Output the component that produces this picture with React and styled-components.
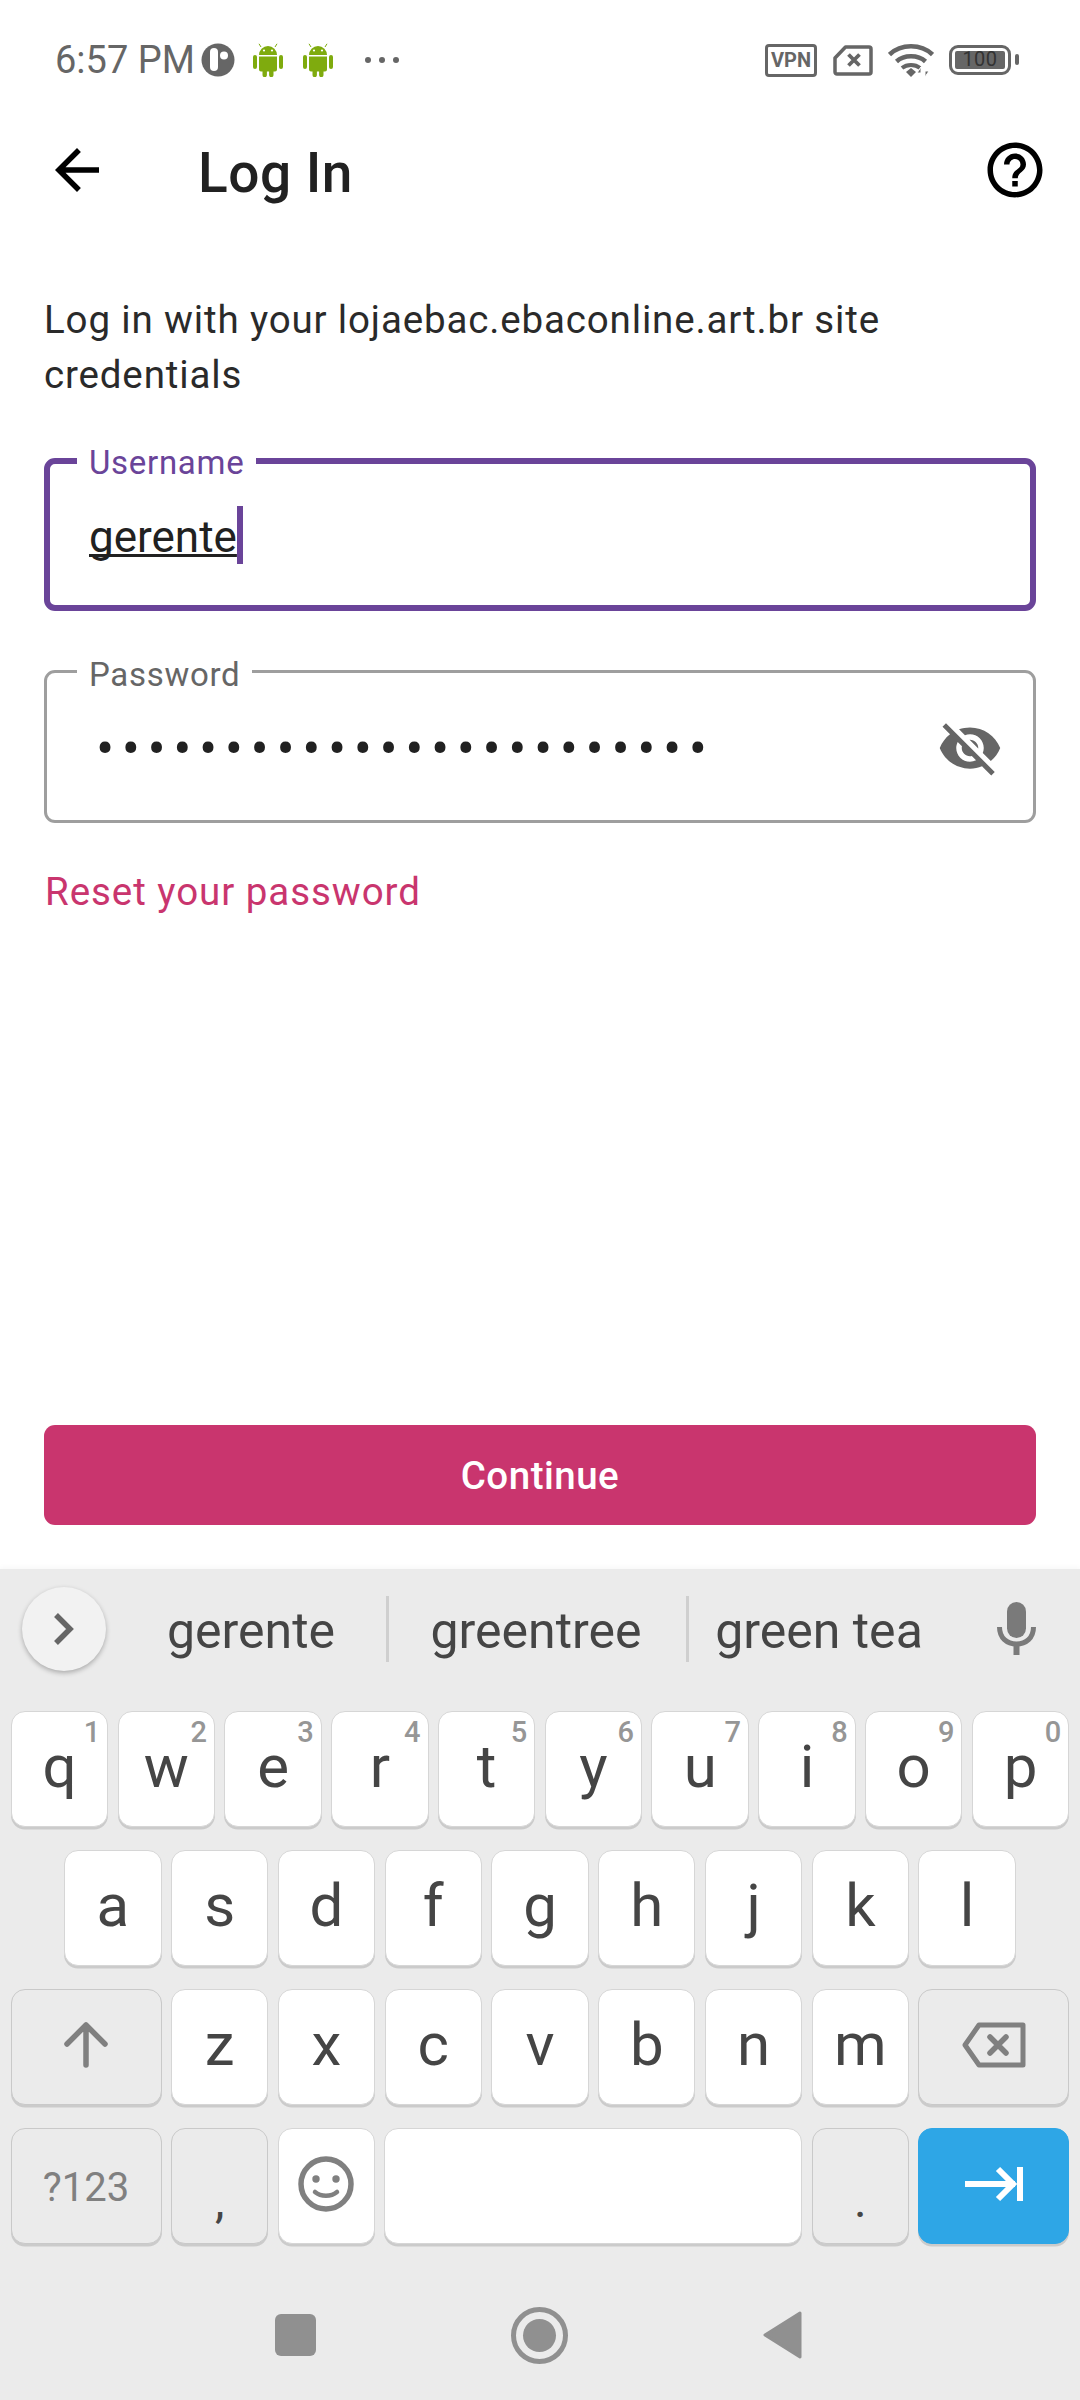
import React from "react";
import styled, { createGlobalStyle } from "styled-components";

const Global = createGlobalStyle`
  html, body { margin: 0; padding: 0; background: #fff; }
  * { box-sizing: border-box; }
`;

const Screen = styled.div`
  width: 1080px;
  height: 2400px;
  display: flex;
  flex-direction: column;
  overflow: hidden;
  background: #fff;
  font-family: Roboto, "Liberation Sans", sans-serif;
`;

const StatusBar = styled.div`
  height: 120px;
  flex: none;
  display: flex;
  align-items: center;
  justify-content: space-between;
  padding: 0 69px 0 55px;
  color: #666;
`;
const StatusGroup = styled.div`
  display: flex;
  align-items: center;
`;
const Time = styled.span`
  font-size: 38px;
  line-height: 44px;
  width: 146px;
  white-space: nowrap;
`;
const VpnBadge = styled.span`
  width: 52px;
  height: 33px;
  border: 3.5px solid #666;
  border-radius: 4px;
  font-size: 20px;
  font-weight: 700;
  line-height: 26px;
  text-align: center;
  margin-right: 16px;
`;
const Battery = styled.div`
  position: relative;
  width: 62px;
  height: 30px;
  border: 3.5px solid #666;
  border-radius: 9px;
  padding: 3px;
  margin-left: 15px;
  display: flex;
  &::after {
    content: "";
    position: absolute;
    right: -11px;
    top: 6px;
    width: 4px;
    height: 11px;
    border-radius: 2px;
    background: #666;
  }
`;
const BatteryFill = styled.span`
  flex: 1;
  background: #666;
  border-radius: 2px;
  color: #333;
  font-size: 20px;
  line-height: 17px;
  text-align: center;
  letter-spacing: 0.5px;
`;

const AppBar = styled.div`
  height: 100px;
  flex: none;
  display: flex;
  align-items: center;
  padding: 0 32px 0 44px;
`;
const Title = styled.h1`
  margin: 0 0 0 88px;
  padding-top: 5px;
  flex: 1;
  font-size: 55px;
  font-weight: 500;
  color: #212121;
  letter-spacing: 0.5px;
  line-height: 66px;
`;
const IconGlyph = styled.svg`
  display: block;
  flex: none;
`;

const Main = styled.div`
  flex: 1;
  display: flex;
  flex-direction: column;
  padding: 72px 44px 44px;
`;
const Intro = styled.p`
  margin: 0 0 56px;
  font-size: 38.5px;
  line-height: 55px;
  letter-spacing: 0.85px;
  color: #2a2a2a;
`;
const Field = styled.div`
  position: relative;
  height: 153px;
  border: ${(p) => (p.$active ? "6px solid #6A4499" : "3px solid #9E9E9E")};
  border-radius: 11px;
  display: flex;
  align-items: center;
  padding-left: ${(p) => (p.$active ? "39px" : "42px")};
  margin-bottom: 59px;
`;
const FieldLabel = styled.label`
  position: absolute;
  left: ${(p) => (p.$active ? "27px" : "30px")};
  top: ${(p) => (p.$active ? "-21px" : "-18px")};
  padding: 0 12px;
  background: #fff;
  color: ${(p) => (p.$active ? "#6A4499" : "#666")};
  font-size: 33px;
  line-height: 40px;
  letter-spacing: 0.7px;
`;
const Typed = styled.span`
  font-size: 44px;
  line-height: 58px;
  color: #212121;
  padding-top: 5px;
  text-decoration: underline;
  text-decoration-thickness: 2.5px;
  text-underline-offset: 2px;
  text-decoration-skip-ink: none;
`;
const Caret = styled.span`
  width: 6px;
  height: 58px;
  background: #6A4499;
`;
const Dots = styled.span`
  font-size: 54px;
  line-height: 58px;
  padding-top: 5px;
  color: #212121;
  letter-spacing: 7.55px;
  margin-left: 7px;
  white-space: nowrap;
`;
const EyeButton = styled.span`
  position: absolute;
  right: 30px;
  top: 42px;
`;
const ResetLink = styled.a`
  margin-top: -18px;
  margin-left: 1px;
  font-size: 38.5px;
  line-height: 55px;
  letter-spacing: 0.95px;
  color: #C9356E;
`;
const PrimaryButton = styled.button`
  margin-top: auto;
  height: 100px;
  border: 0;
  border-radius: 11px;
  padding-top: 2px;
  background: #C9356E;
  color: #fff;
  font-family: inherit;
  font-size: 38.5px;
  font-weight: 500;
  letter-spacing: 0.5px;
`;

const Keyboard = styled.div`
  flex: none;
  height: 831px;
  background: #ebebeb;
  box-shadow: 0 -2px 5px rgba(0, 0, 0, 0.03);
  display: flex;
  flex-direction: column;
`;
const Suggestions = styled.div`
  height: 142px;
  flex: none;
  display: grid;
  grid-template-columns: 116px 270px 300px 266px 128px;
  padding-top: 18px;
`;
const Expand = styled.div`
  width: 84px;
  height: 84px;
  margin-left: 22px;
  border-radius: 50%;
  background: #f2f2f2;
  box-shadow: 0 2px 5px rgba(0, 0, 0, 0.28);
  display: flex;
  align-items: center;
  justify-content: center;
`;
const Suggestion = styled.div`
  height: 66px;
  margin-top: 9px;
  display: flex;
  align-items: center;
  justify-content: center;
  font-size: 50px;
  color: #454545;
  white-space: nowrap;
  padding-top: 3px;
  border-left: ${(p) => (p.$divided ? "3px solid #cfcfcf" : "0")};
  padding-right: ${(p) => (p.$divided ? "3px" : "0")};
`;
const MicCell = styled.div`
  display: flex;
  justify-content: center;
  padding-top: 15px;
`;
const KeyRows = styled.div`
  display: flex;
  flex-direction: column;
  gap: 23px;
`;
const KeyRow = styled.div`
  display: flex;
  justify-content: center;
  gap: 9.4px;
`;
const Key = styled.div`
  position: relative;
  flex: none;
  width: ${(p) => p.$w || 97.4}px;
  height: 116px;
  border-radius: 14px;
  background: ${(p) => (p.$tone === "accent" ? "#2EA6E6" : p.$tone === "muted" ? "#ebebeb" : "#fff")};
  border: 1.5px solid ${(p) => (p.$tone === "accent" ? "#2EA6E6" : p.$tone === "muted" ? "#c9c9c9" : "#d6d6d6")};
  box-shadow: 0 2.5px 0 #cbcbcb;
  display: flex;
  align-items: center;
  justify-content: center;
  color: #454545;
  font-size: 60px;
  padding-bottom: 5px;
`;
const Hint = styled.span`
  position: absolute;
  top: 3px;
  right: 7px;
  font-size: 29px;
  line-height: 34px;
  font-weight: 500;
  color: #969696;
`;
const ModeLabel = styled.span`
  font-size: 40px;
  color: #808080;
  padding-top: 7px;
`;
const PunctLabel = styled.span`
  font-size: 48px;
  color: #454545;
  padding-top: 34px;
`;
const NavBar = styled.div`
  margin-top: 26px;
  height: 130px;
  padding-right: 3px;
  display: flex;
  align-items: center;
  justify-content: center;
  gap: 195px;
`;
const NavSquare = styled.span`
  width: 41px;
  height: 42px;
  border-radius: 6px;
  background: #909090;
`;
const NavCircle = styled.span`
  width: 57px;
  height: 57px;
  border-radius: 50%;
  border: 5px solid #909090;
  padding: 7px;
  display: flex;
  &::after {
    content: "";
    flex: 1;
    border-radius: 50%;
    background: #909090;
  }
`;

const AndroidIcon = ({ style }) => (
  <IconGlyph width="30" height="34" viewBox="0 0 30 34" style={style}>
    <g fill="#7FAB0E">
      <path d="M6 12a9 9 0 0 1 18 0z" />
      <path d="M8 4 6 .8M22 4l2-3.2" stroke="#7FAB0E" strokeWidth="1" />
      <path d="M6 13.500h18v13a2 2 0 0 1-2 2h-1.500v3.500a2.200 2.200 0 0 1-4.400 0v-3.500h-2.200v3.500a2.200 2.200 0 0 1-4.400 0v-3.500H8a2 2 0 0 1-2-2z" />
      <rect x="0" y="12" width="4" height="14" rx="2" />
      <rect x="26" y="12" width="4" height="14" rx="2" />
    </g>
    <circle cx="11" cy="7.500" r="1.100" fill="#fff" />
    <circle cx="19" cy="7.500" r="1.100" fill="#fff" />
  </IconGlyph>
);

const M = ({ d, size = 66, color = "#000" }) => (
  <IconGlyph width={size} height={size} viewBox="0 0 24 24">
    <path d={d} fill={color} />
  </IconGlyph>
);

const rows = [
  [["q", 1], ["w", 2], ["e", 3], ["r", 4], ["t", 5], ["y", 6], ["u", 7], ["i", 8], ["o", 9], ["p", 0]],
  [["a"], ["s"], ["d"], ["f"], ["g"], ["h"], ["j"], ["k"], ["l"]],
];
const lower = ["z", "x", "c", "v", "b", "n", "m"];

export default function App() {
  return (
    <Screen>
      <Global />
      <StatusBar>
        <StatusGroup>
          <Time>6:57 PM</Time>
          <IconGlyph width="34" height="34" viewBox="0 0 34 34" style={{ marginRight: 18 }}>
            <circle cx="17" cy="17" r="16.500" fill="#666" />
            <rect x="9" y="5" width="8" height="23" rx="4" fill="#fff" />
            <circle cx="23" cy="12.500" r="4" fill="#fff" />
          </IconGlyph>
          <AndroidIcon style={{ marginRight: 20 }} />
          <AndroidIcon style={{ marginRight: 32 }} />
          <IconGlyph width="34" height="8" viewBox="0 0 34 8">
            <circle cx="3" cy="4" r="3" fill="#666" />
            <circle cx="17" cy="4" r="3" fill="#666" />
            <circle cx="31" cy="4" r="3" fill="#666" />
          </IconGlyph>
        </StatusGroup>
        <StatusGroup>
          <VpnBadge>VPN</VpnBadge>
          <IconGlyph width="40" height="31" viewBox="0 0 40 31" style={{ marginRight: 15 }}>
            <path d="M12.500 2H36a2 2 0 0 1 2 2v23a2 2 0 0 1-2 2H4a2 2 0 0 1-2-2V13z" fill="none" stroke="#666" strokeWidth="3.500" strokeLinejoin="round" />
            <path d="M15.500 9.500l11 11M26.500 9.500l-11 11" stroke="#666" strokeWidth="3.800" />
          </IconGlyph>
          <IconGlyph width="46" height="34" viewBox="0 0 46 34">
            <path d="M1.500 11.500C13 .5 33 .5 44.500 11.500" fill="none" stroke="#666" strokeWidth="4.500" />
            <path d="M8.500 18.500C16 11.500 30 11.500 37.500 18.500" fill="none" stroke="#666" strokeWidth="4.500" />
            <path d="M14 25c5-4 13-4 18 0" fill="none" stroke="#666" strokeWidth="4" />
            <path d="M18 29l5-4 5 4-5 5z" fill="#666" />
            <path d="M33 34v-10l-4 6h4zM37 24v10l4-6h-4z" fill="#666" stroke="#fff" strokeWidth="1" />
          </IconGlyph>
          <Battery>
            <BatteryFill>100</BatteryFill>
          </Battery>
        </StatusGroup>
      </StatusBar>

      <AppBar>
        <M d="M20 11H7.830l5.590-5.590L12 4l-8 8 8 8 1.410-1.410L7.830 13H20v-2z" />
        <Title>Log In</Title>
        <M d="M11 18h2v-2h-2v2zm1-16C6.480 2 2 6.480 2 12s4.480 10 10 10 10-4.480 10-10S17.520 2 12 2zm0 18c-4.410 0-8-3.590-8-8s3.590-8 8-8 8 3.590 8 8-3.590 8-8 8zm0-14c-2.210 0-4 1.790-4 4h2c0-1.100.9-2 2-2s2 .9 2 2c0 2-3 1.750-3 5h2c0-2.250 3-2.500 3-5 0-2.210-1.790-4-4-4z" />
      </AppBar>

      <Main>
        <Intro>
          Log in with your lojaebac.ebaconline.art.br site credentials
        </Intro>
        <Field $active>
          <FieldLabel $active>Username</FieldLabel>
          <Typed>gerente</Typed>
          <Caret />
        </Field>
        <Field>
          <FieldLabel>Password</FieldLabel>
          <Dots>{"•".repeat(24)}</Dots>
          <EyeButton>
            <M
              color="#666"
              d="M12 7c2.760 0 5 2.240 5 5 0 .65-.13 1.260-.36 1.830l2.920 2.920c1.510-1.260 2.700-2.890 3.430-4.750-1.730-4.390-6-7.500-11-7.500-1.400 0-2.740.25-3.980.7l2.160 2.160C10.740 7.130 11.350 7 12 7zM2 4.270l2.280 2.280.46.46C3.080 8.300 1.780 10.020 1 12c1.730 4.390 6 7.500 11 7.500 1.550 0 3.030-.3 4.380-.84l.42.42L19.730 22 21 20.730 3.270 3 2 4.270zM7.530 9.800l1.550 1.550c-.05.21-.08.43-.08.65 0 1.660 1.340 3 3 3 .22 0 .44-.03.65-.08l1.550 1.550c-.67.33-1.410.53-2.200.53-2.760 0-5-2.240-5-5 0-.79.2-1.530.53-2.200zm4.310-.78l3.150 3.150.02-.16c0-1.660-1.340-3-3-3l-.17.01z"
            />
          </EyeButton>
        </Field>
        <ResetLink>Reset your password</ResetLink>
        <PrimaryButton>Continue</PrimaryButton>
      </Main>

      <Keyboard>
        <Suggestions>
          <Expand>
            <IconGlyph width="22" height="34" viewBox="0 0 22 34">
              <path d="M3 3l14 14L3 31" fill="none" stroke="#666" strokeWidth="5.500" />
            </IconGlyph>
          </Expand>
          <Suggestion>gerente</Suggestion>
          <Suggestion $divided>greentree</Suggestion>
          <Suggestion $divided>green tea</Suggestion>
          <MicCell>
            <IconGlyph width="39" height="53" viewBox="0 0 39 53">
              <rect x="10" y="0" width="19" height="36" rx="9.500" fill="#7a7a7a" />
              <path d="M2.500 25c0 11 7.500 17 17 17s17-6 17-17" fill="none" stroke="#7a7a7a" strokeWidth="5" />
              <rect x="16.500" y="41" width="6" height="12" fill="#7a7a7a" />
            </IconGlyph>
          </MicCell>
        </Suggestions>
        <KeyRows>
          {rows.map((row, i) => (
            <KeyRow key={i}>
              {row.map(([ch, hint]) => (
                <Key key={ch}>
                  {ch}
                  {hint !== undefined && <Hint>{hint}</Hint>}
                </Key>
              ))}
            </KeyRow>
          ))}
          <KeyRow>
            <Key $w={151} $tone="muted">
              <IconGlyph width="44" height="46" viewBox="0 0 44 46">
                <path d="M22 43V3M3 22L22 3l19 19" fill="none" stroke="#808080" strokeWidth="5.500" strokeLinecap="round" strokeLinejoin="round" />
              </IconGlyph>
            </Key>
            {lower.map((ch) => (
              <Key key={ch}>{ch}</Key>
            ))}
            <Key $w={151} $tone="muted">
              <IconGlyph width="64" height="46" viewBox="0 0 64 46">
                <path d="M17 3h44v40H17L3 23z" fill="none" stroke="#808080" strokeWidth="5" strokeLinejoin="round" />
                <path d="M28 15l16 16M44 15L28 31" stroke="#808080" strokeWidth="5.500" strokeLinecap="round" />
              </IconGlyph>
            </Key>
          </KeyRow>
          <KeyRow>
            <Key $w={151} $tone="muted">
              <ModeLabel>?123</ModeLabel>
            </Key>
            <Key $tone="muted">
              <PunctLabel>,</PunctLabel>
            </Key>
            <Key>
              <IconGlyph width="56" height="56" viewBox="0 0 56 56">
                <circle cx="28" cy="28" r="25" fill="none" stroke="#808080" strokeWidth="5.500" />
                <circle cx="18" cy="23" r="3.700" fill="#808080" />
                <circle cx="38" cy="23" r="3.700" fill="#808080" />
                <path d="M17 36c6 5 16 5 22 0" fill="none" stroke="#808080" strokeWidth="4.500" strokeLinecap="round" />
              </IconGlyph>
            </Key>
            <Key $w={417.8} />
            <Key $tone="muted">
              <PunctLabel>.</PunctLabel>
            </Key>
            <Key $w={151} $tone="accent">
              <IconGlyph width="60" height="36" viewBox="0 0 60 36">
                <path d="M1 18h50M34 3l15 15-15 15" fill="none" stroke="#fff" strokeWidth="6" />
                <path d="M56 1v34" stroke="#fff" strokeWidth="6" />
              </IconGlyph>
            </Key>
          </KeyRow>
        </KeyRows>
        <NavBar>
          <NavSquare />
          <NavCircle />
          <IconGlyph width="39" height="48" viewBox="0 0 39 48">
            <path d="M37 2L2 24l35 22z" fill="#909090" stroke="#909090" strokeWidth="3" strokeLinejoin="round" />
          </IconGlyph>
        </NavBar>
      </Keyboard>
    </Screen>
  );
}
